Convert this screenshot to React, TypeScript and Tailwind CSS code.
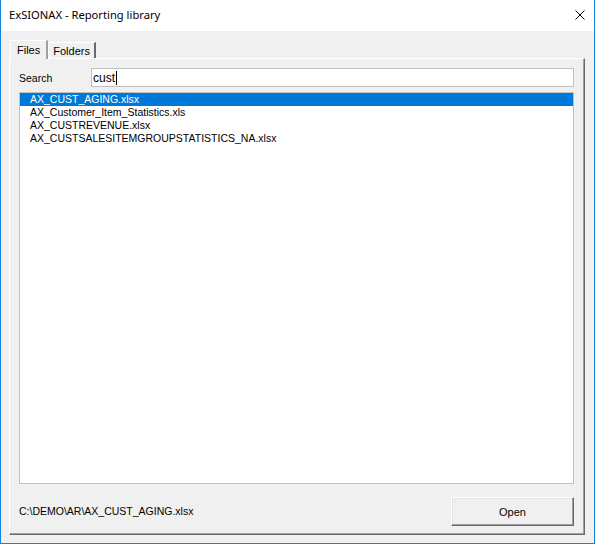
import { useState } from 'react';

const FILES = [
  'AX_CUST_AGING.xlsx',
  'AX_Customer_Item_Statistics.xls',
  'AX_CUSTREVENUE.xlsx',
  'AX_CUSTSALESITEMGROUPSTATISTICS_NA.xlsx',
];

const ui = { fontFamily: '"Liberation Sans", Arial, sans-serif' };
const titleFont = { fontFamily: '"Noto Sans", "Open Sans", sans-serif' };

export default function App() {
  const [tab, setTab] = useState<'files' | 'folders'>('files');
  const [query] = useState('cust');
  const [selected, setSelected] = useState(0);

  return (
    <div className="w-[595px] h-[544px] flex flex-col border-x border-b border-[#1883d7] bg-[#f0f0f0] text-black" style={ui}>
      {/* title bar */}
      <div className="h-[31px] shrink-0 bg-white flex items-center justify-between pl-[8px] pr-[9px]">
        <span className="text-[11.2px]" style={titleFont}>ExSIONAX - Reporting library</span>
        <svg width="10" height="10" viewBox="0 0 10 10" className="mb-px">
          <path d="M0.5 0.5 L9.5 9.5 M9.5 0.5 L0.5 9.5" stroke="#000" strokeWidth="1" fill="none" />
        </svg>
      </div>

      <div className="flex-1 flex flex-col pt-[9px] pl-[8px] pr-[9px] pb-[8px]">
        {/* tab strip */}
        <div className="flex items-end h-[18px] pl-[1px] relative z-10">
          <button
            onClick={() => setTab('files')}
            className={
              tab === 'files'
                ? 'h-[19px] -mb-px px-[6px] bg-[#f0f0f0] border-l border-t border-white border-r-2 border-r-[#a0a0a0] text-[11px] leading-[14px] flex items-start pt-[2px]'
                : 'h-[16px] px-[4px] border-l border-t border-white border-r-2 border-r-[#a0a0a0] text-[11px] leading-[14px] flex items-start pt-[1px]'
            }
          >
            Files
          </button>
          <button
            onClick={() => setTab('folders')}
            className={
              tab === 'folders'
                ? 'h-[19px] -mb-px px-[6px] bg-[#f0f0f0] border-l border-t border-white border-r-2 border-r-[#a0a0a0] text-[11px] leading-[14px] flex items-start pt-[2px]'
                : 'h-[16px] w-[48px] px-[4px] border-l border-t border-white border-r-2 border-r-[#696969] text-[11px] leading-[14px] flex items-start pt-[1px]'
            }
          >
            Folders
          </button>
        </div>

        {/* tab page */}
        <div className="flex-1 flex flex-col border-l border-t border-white border-r border-b border-r-[#696969] border-b-[#696969] shadow-[inset_-1px_-1px_0_#a0a0a0] pt-[9px] pl-[9px] pr-[10px] pb-[8px]">
          <div className="flex items-center h-[19px]">
            <span className="w-[72px] text-[10.5px] pt-[2px]">Search</span>
            {/* search box with its text cursor */}
            <div className="flex-1 h-[19px] bg-white border border-[#c0c0c0] flex items-center pl-[1px] text-[12px] leading-[15px] pt-px">
              <span>{query}</span>
              <span className="w-px h-[14px] bg-black ml-px" />
            </div>
          </div>

          <div className="flex-1 mt-[5px] bg-white border border-[#c0c0c0]">
            {FILES.filter((f) => f.toLowerCase().includes(query.toLowerCase())).map((f, i) => (
              <div
                key={f}
                onClick={() => setSelected(i)}
                className={`h-[13px] pl-[10px] text-[10.5px] leading-[13px] ${i === selected ? 'bg-[#0078d7] text-white' : ''}`}
              >
                {f}
              </div>
            ))}
          </div>

          <div className="flex items-center justify-between mt-[13px]">
            <span className="text-[10.5px] pt-px">C:\DEMO\AR\{FILES[selected]}</span>
            <button className="w-[123px] h-[29px] bg-[#f0f0f0] border-l border-t border-white border-r border-b border-r-[#696969] border-b-[#696969] shadow-[inset_-1px_-1px_0_#a0a0a0,inset_1px_1px_0_#e3e3e3] text-[11px] pt-px">
              Open
            </button>
          </div>
        </div>
      </div>
    </div>
  );
}
